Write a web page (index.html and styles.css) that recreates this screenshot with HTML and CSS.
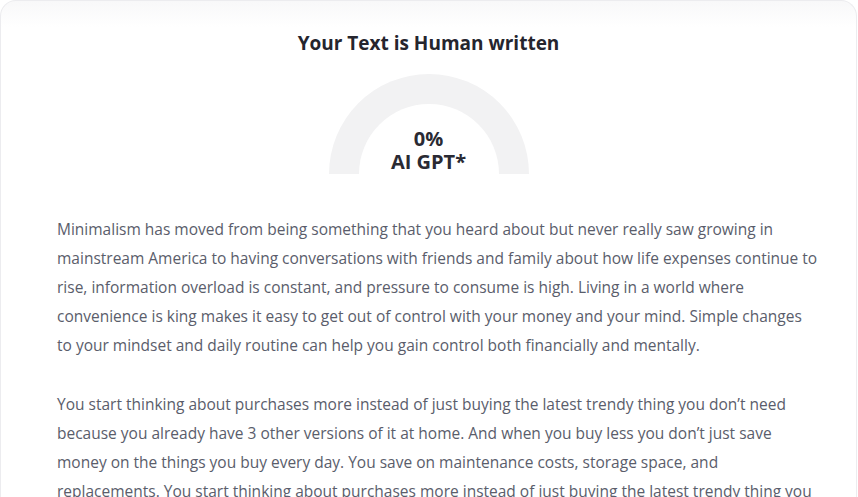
FILE: index.html
```html
<!DOCTYPE html>
<html lang="en">
<head>
<meta charset="utf-8">
<title>Result</title>
<link rel="stylesheet" href="styles.css">
</head>
<body>
<section class="card">
  <h2 class="title">Your Text is Human written</h2>
  <div class="gauge">
    <div class="gauge-inner">
      <span class="gauge-value">0%</span>
      <span class="gauge-label">AI GPT*</span>
    </div>
  </div>
  <div class="content">
    <p>Minimalism has moved from being something that you heard about but never really saw growing in mainstream America to having conversations with friends and family about how life expenses continue to rise, information overload is constant, and pressure to consume is high. Living in a world where convenience is king makes it easy to get out of control with your money and your mind. Simple changes to your mindset and daily routine can help you gain control both financially and mentally.</p>
    <p>You start thinking about purchases more instead of just buying the latest trendy thing you don’t need because you already have 3 other versions of it at home. And when you buy less you don’t just save money on the things you buy every day. You save on maintenance costs, storage space, and replacements. You start thinking about purchases more instead of just buying the latest trendy thing you don’t need because you already have 3 other versions of it at home.</p>
  </div>
</section>
</body>
</html>
```
FILE: styles.css
```css
html, body {
  margin: 0;
  padding: 0;
  background: #ffffff;
}
body {
  font-family: "Open Sans", "Noto Sans", "Liberation Sans", sans-serif;
  overflow: hidden;
}
.card {
  box-sizing: border-box;
  width: 857px;
  min-height: 700px;
  border: 1px solid #ececef;
  border-bottom: none;
  border-radius: 16px 16px 0 0;
  background: linear-gradient(#f8f8f9 0, #ffffff 26px);
  padding: 28px 0 0;
}
.title {
  margin: 0;
  text-align: center;
  font-size: 19px;
  line-height: 28px;
  font-weight: 700;
  color: #25252e;
}
.gauge {
  margin: 17px auto 0;
  width: 200px;
  height: 100px;
  border-radius: 100px 100px 0 0;
  background: #f2f2f3;
  display: flex;
  justify-content: center;
  align-items: flex-end;
}
.gauge-inner {
  width: 140px;
  height: 70px;
  border-radius: 70px 70px 0 0;
  background: #ffffff;
  display: flex;
  flex-direction: column;
  justify-content: flex-end;
  align-items: center;
  padding-bottom: 1px;
  box-sizing: border-box;
  color: #2a2a33;
  font-weight: 700;
  font-size: 20px;
  line-height: 23px;
}
.content {
  width: 762px;
  padding: 41px 0 0 56px;
  color: #5a5d6b;
  font-size: 15.5px;
  line-height: 29px;
}
.content p {
  margin: 0 0 30px;
}
```
